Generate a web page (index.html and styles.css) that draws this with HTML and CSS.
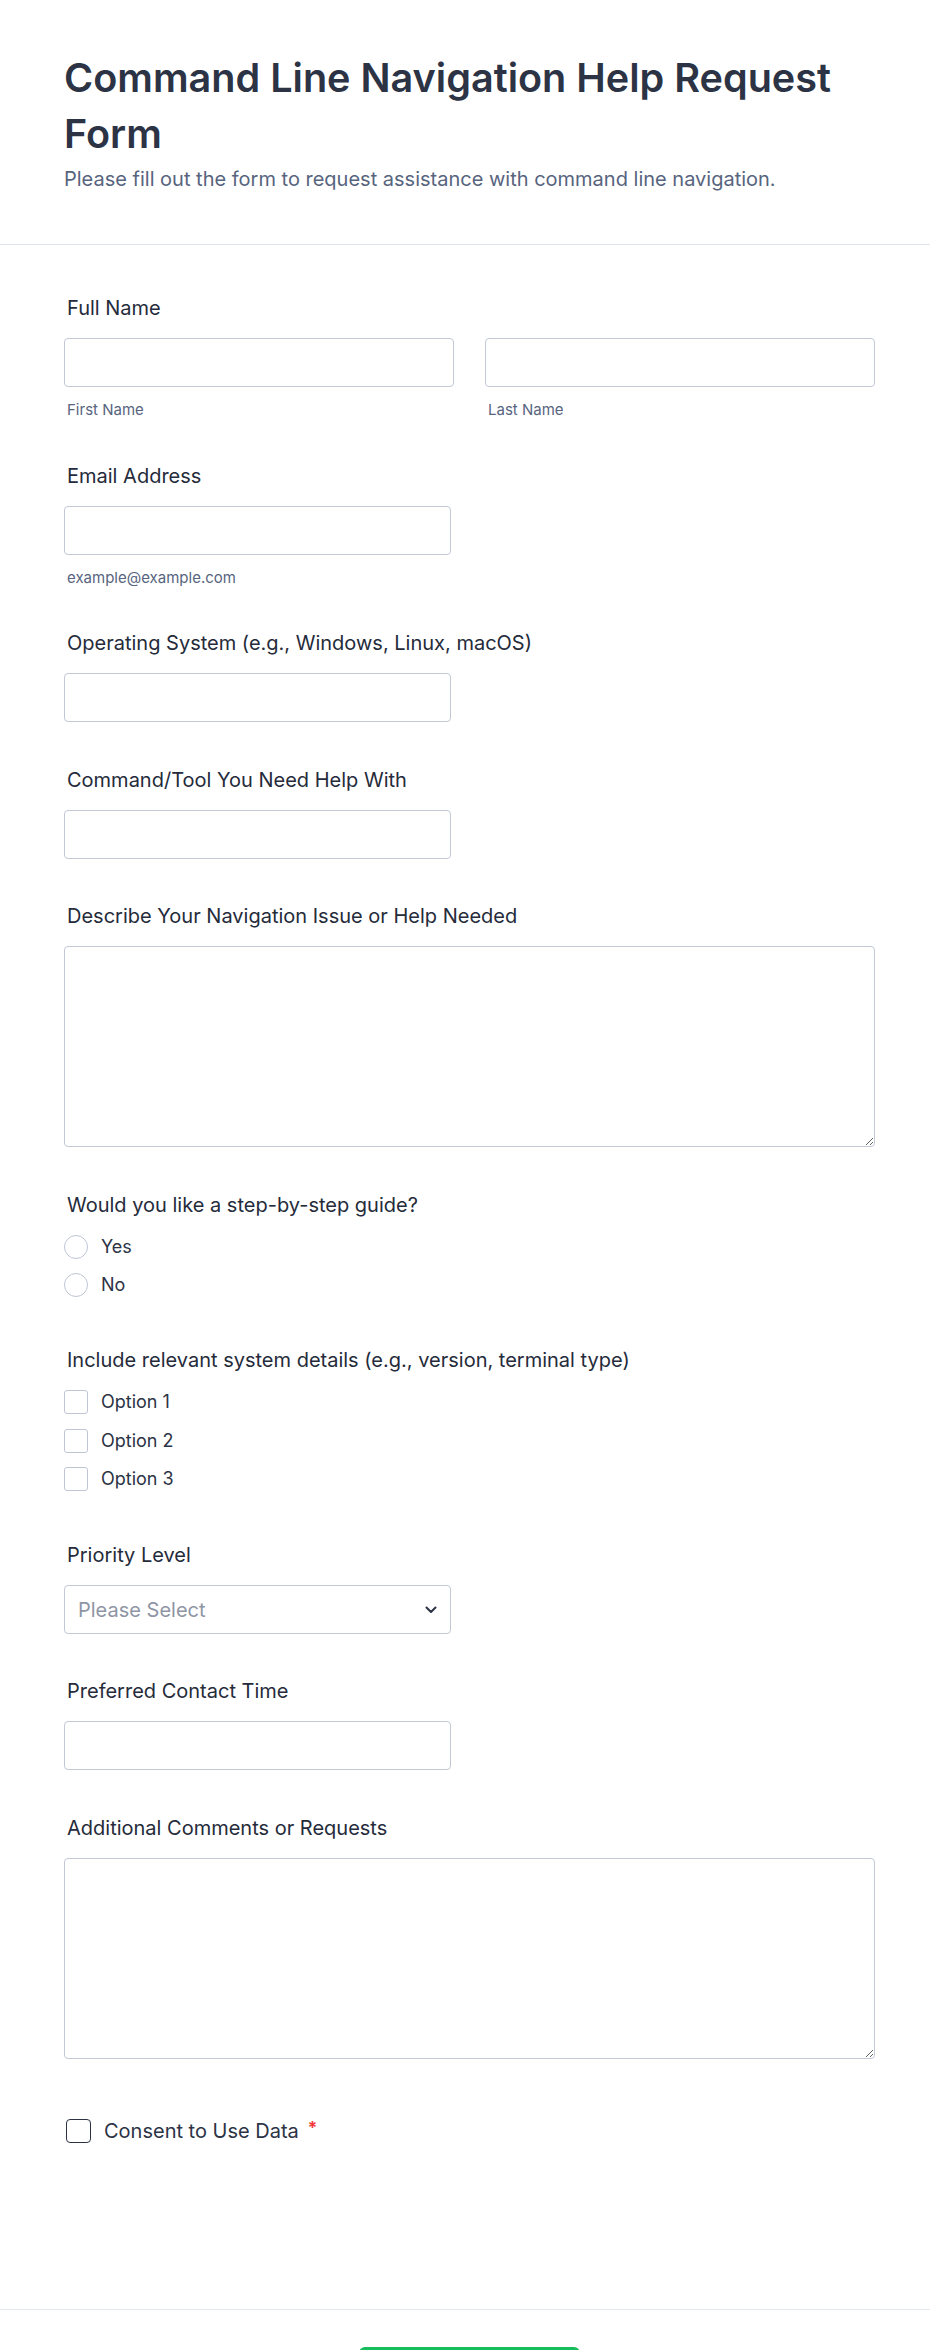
FILE: index.html
```html
<!DOCTYPE html>
<html lang="en">
<head>
<meta charset="utf-8">
<title>Command Line Navigation Help Request Form</title>
<link rel="stylesheet" href="styles.css">
</head>
<body>
<header class="form-header">
  <h1 class="form-title">Command Line Navigation Help Request Form</h1>
  <p class="form-subtitle">Please fill out the form to request assistance with command line navigation.</p>
</header>

<form class="form-body">
  <div class="field">
    <label class="field-label">Full Name</label>
    <div class="name-row">
      <div class="name-col">
        <input class="text-input" type="text">
        <span class="sublabel">First Name</span>
      </div>
      <div class="name-col">
        <input class="text-input" type="text">
        <span class="sublabel">Last Name</span>
      </div>
    </div>
  </div>

  <div class="field">
    <label class="field-label">Email Address</label>
    <input class="text-input half" type="email">
    <span class="sublabel">example@example.com</span>
  </div>

  <div class="field">
    <label class="field-label">Operating System (e.g., Windows, Linux, macOS)</label>
    <input class="text-input half" type="text">
  </div>

  <div class="field">
    <label class="field-label">Command/Tool You Need Help With</label>
    <input class="text-input half" type="text">
  </div>

  <div class="field">
    <label class="field-label">Describe Your Navigation Issue or Help Needed</label>
    <textarea class="text-area"></textarea>
  </div>

  <div class="field choice-field">
    <label class="field-label">Would you like a step-by-step guide?</label>
    <div class="choices">
      <label class="choice"><span class="radio"></span><span class="choice-text">Yes</span></label>
      <label class="choice"><span class="radio"></span><span class="choice-text">No</span></label>
    </div>
  </div>

  <div class="field choice-field">
    <label class="field-label">Include relevant system details (e.g., version, terminal type)</label>
    <div class="choices">
      <label class="choice"><span class="check"></span><span class="choice-text">Option 1</span></label>
      <label class="choice"><span class="check"></span><span class="choice-text">Option 2</span></label>
      <label class="choice"><span class="check"></span><span class="choice-text">Option 3</span></label>
    </div>
  </div>

  <div class="field">
    <label class="field-label">Priority Level</label>
    <div class="select half">
      <span class="select-placeholder">Please Select</span>
      <svg class="chevron" width="12" height="8" viewBox="0 0 12 8" aria-hidden="true">
        <path d="M1.5 1.5 L6 6 L10.5 1.5" fill="none" stroke="#2c3345" stroke-width="2" stroke-linecap="round" stroke-linejoin="round"/>
      </svg>
    </div>
  </div>

  <div class="field">
    <label class="field-label">Preferred Contact Time</label>
    <input class="text-input half" type="text">
  </div>

  <div class="field">
    <label class="field-label">Additional Comments or Requests</label>
    <textarea class="text-area"></textarea>
  </div>

  <div class="field consent-field">
    <label class="consent">
      <span class="consent-box"></span>
      <span class="consent-text">Consent to Use Data</span>
      <span class="required">*</span>
    </label>
  </div>
</form>

<footer class="form-footer">
  <button class="submit-btn" type="button"><span class="submit-text">Submit</span></button>
</footer>
</body>
</html>
```

FILE: styles.css
```css
* {
  box-sizing: border-box;
}

html, body {
  margin: 0;
  padding: 0;
  background: #ffffff;
}

body {
  font-family: Inter, "Noto Sans", "Liberation Sans", sans-serif;
  color: #2c3345;
}

.form-header {
  padding: 50px 55px 51px 64px;
  border-bottom: 1px solid #e0e4eb;
}

.form-title {
  margin: 0;
  font-size: 39.6px;
  line-height: 56px;
  font-weight: 600;
  color: #2c3345;
}

.form-subtitle {
  margin: 3px 0 0;
  font-size: 20px;
  line-height: 28px;
  color: #57647e;
}

.form-body {
  display: flex;
  flex-direction: column;
  gap: 45.5px;
  padding: 51px 55px 166px 64px;
}

.field {
  display: flex;
  flex-direction: column;
  align-items: flex-start;
}

.field-label {
  display: block;
  padding-left: 3px;
  font-size: 20px;
  line-height: 24px;
  font-weight: 400;
  color: #252b3a;
  margin-bottom: 18px;
}

.name-row {
  display: flex;
  gap: 31px;
  width: 100%;
}

.name-col {
  flex: 1;
  display: flex;
  flex-direction: column;
}

.text-input {
  display: block;
  width: 100%;
  height: 49px;
  border: 1px solid #c3c8d5;
  border-radius: 4px;
  background: #ffffff;
  font-family: inherit;
  font-size: 20px;
  padding: 0 14px;
  margin: 0;
}

.text-input.half,
.select.half {
  width: 387px;
}

.sublabel {
  display: block;
  margin-top: 15px;
  padding-left: 3px;
  font-size: 15px;
  line-height: 16px;
  color: #57647e;
}

.text-area {
  display: block;
  width: 100%;
  height: 201px;
  border: 1px solid #c3c8d5;
  border-radius: 4px;
  background: #ffffff;
  font-family: inherit;
  font-size: 20px;
  padding: 12px 14px;
  margin: 0;
  resize: vertical;
}

.choice-field {
  padding-bottom: 6px;
}

.choices {
  display: flex;
  flex-direction: column;
  gap: 14.4px;
}

.choice {
  display: flex;
  align-items: center;
  gap: 13px;
  height: 24px;
}

.radio {
  width: 24px;
  height: 24px;
  border: 1.5px solid #bfc5d3;
  border-radius: 50%;
  background: #ffffff;
  flex: none;
}

.check {
  width: 24px;
  height: 24px;
  border: 1.5px solid #bfc5d3;
  border-radius: 3px;
  background: #ffffff;
  flex: none;
}

.choice-text {
  font-size: 18px;
  line-height: 24px;
  color: #2c3345;
}

.select {
  display: flex;
  align-items: center;
  justify-content: space-between;
  height: 49px;
  border: 1px solid #c3c8d5;
  border-radius: 4px;
  background: #ffffff;
  padding: 1px 13px 0 13px;
}

.select-placeholder {
  font-size: 20px;
  line-height: 24px;
  color: #8e95a4;
}

.chevron {
  display: block;
}

.consent-field {
  padding-top: 15px;
}

.consent {
  display: flex;
  align-items: center;
  height: 24px;
}

.consent-box {
  width: 25px;
  height: 24px;
  margin-left: 2px;
  border: 1.5px solid #2c3345;
  border-radius: 4px;
  background: #ffffff;
  flex: none;
}

.consent-text {
  margin-left: 13px;
  font-size: 20px;
  line-height: 24px;
  color: #2c3345;
}

.required {
  align-self: flex-start;
  margin-left: 9px;
  margin-top: 0;
  font-size: 17px;
  line-height: 18px;
  font-weight: 700;
  color: #f23a3c;
}

.form-footer {
  border-top: 1px solid #e3e7ee;
  padding: 37px 55px 40px 64px;
  display: flex;
  justify-content: center;
}

.submit-btn {
  display: flex;
  align-items: flex-end;
  justify-content: center;
  width: 221px;
  height: 50px;
  padding: 0 0 12px;
  border: none;
  border-radius: 6px;
  background: #18bd5b;
  color: #ffffff;
  font-family: inherit;
}

.submit-text {
  font-size: 20px;
  line-height: 20px;
  font-weight: 600;
}
```
